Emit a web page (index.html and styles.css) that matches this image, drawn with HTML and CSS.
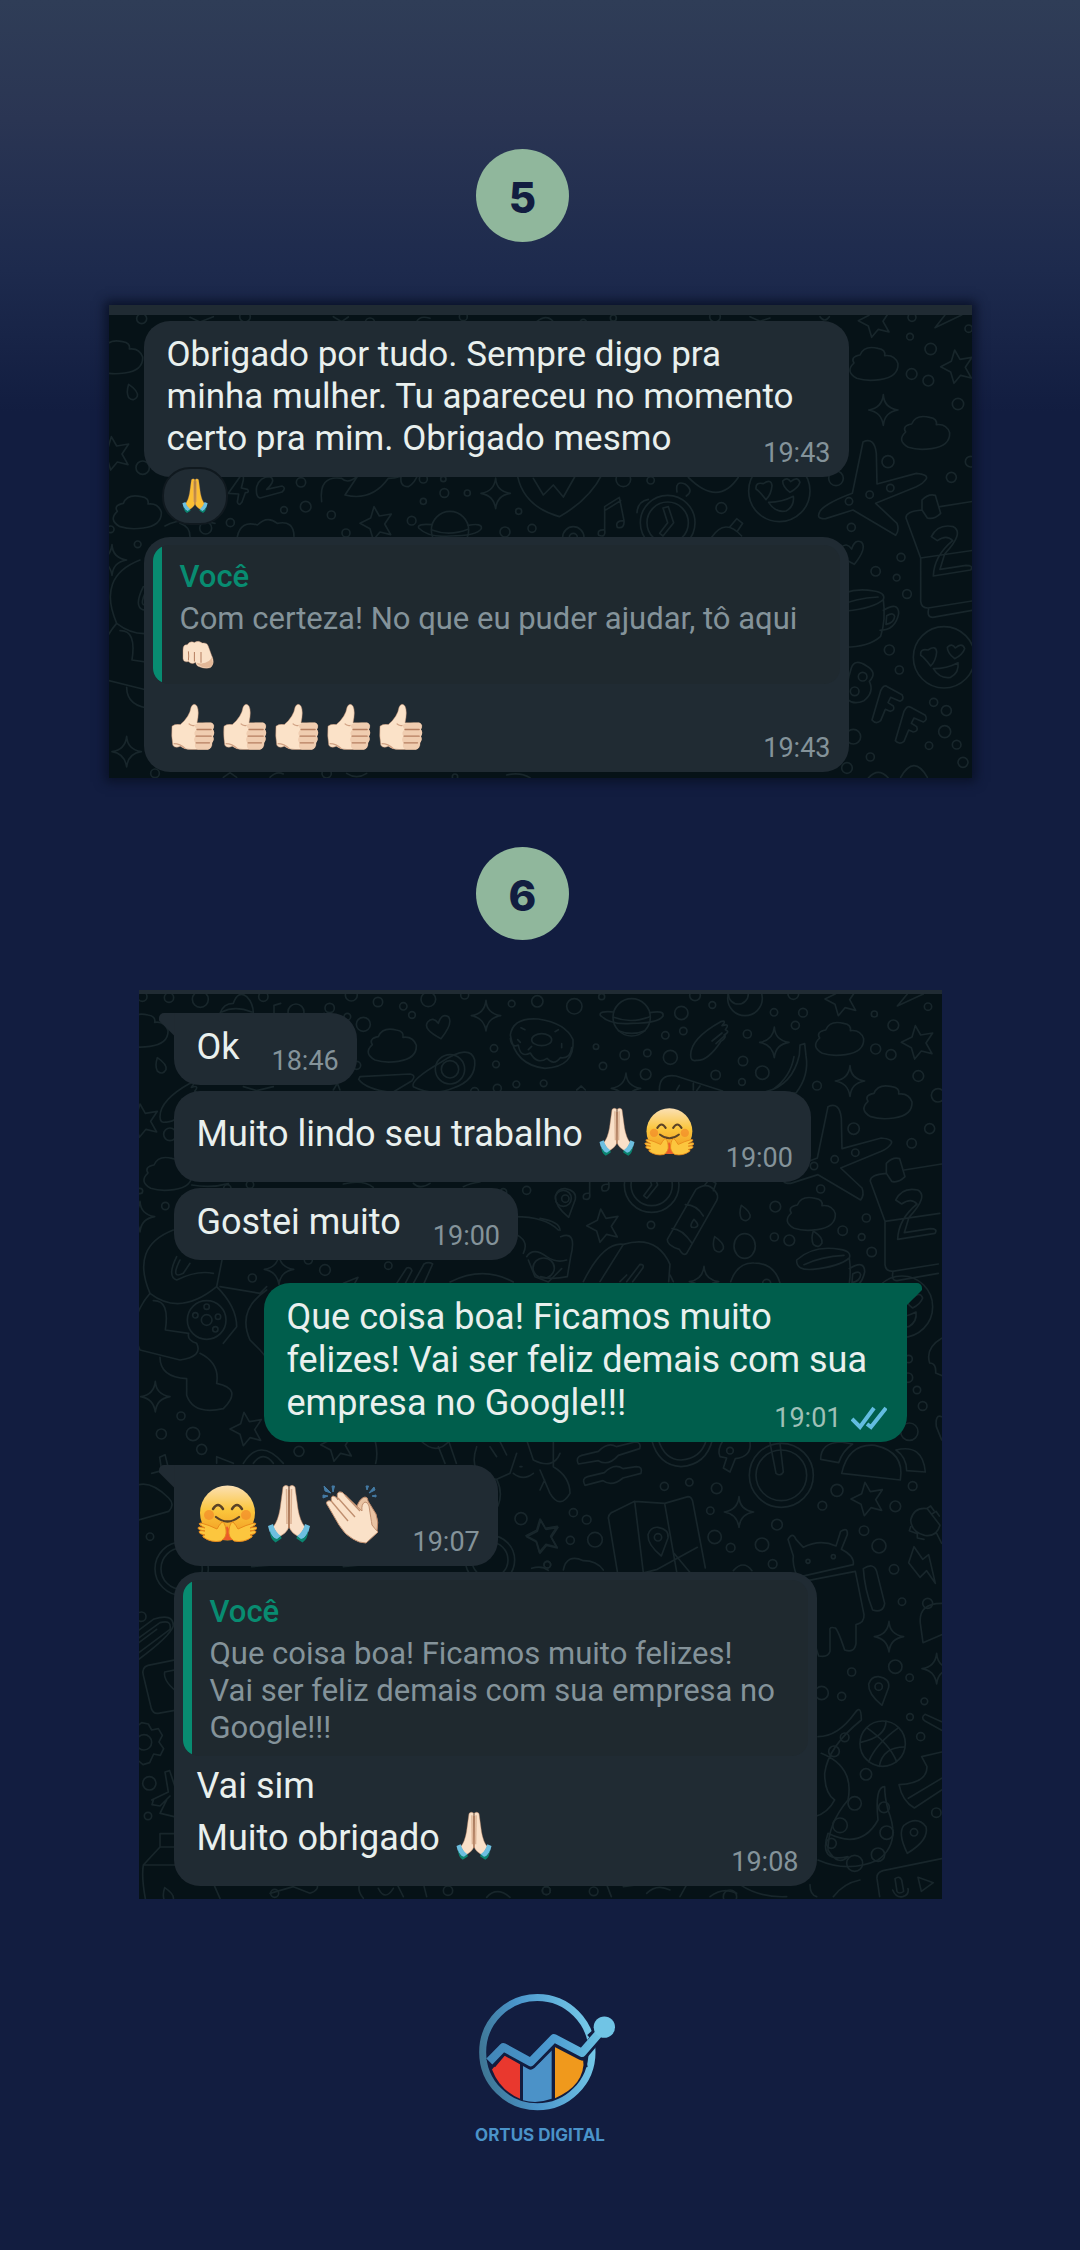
FILE: index.html
```html
<!DOCTYPE html>
<html lang="pt-BR">
<head>
<meta charset="utf-8">
<meta name="viewport" content="width=device-width, initial-scale=1">
<title>Ortus Digital – Depoimentos</title>
<link rel="stylesheet" href="styles.css">
</head>
<body>
<svg class="sprite" aria-hidden="true">
  <defs>
    <linearGradient id="face" x1="0" y1="0" x2="0" y2="1">
      <stop offset="0" stop-color="#fbe0b4"/><stop offset=".45" stop-color="#fbc63c"/><stop offset="1" stop-color="#f0931c"/>
    </linearGradient>
    <linearGradient id="ring" x1="0" y1=".6" x2="1" y2=".4">
      <stop offset="0" stop-color="#3f7796"/><stop offset=".4" stop-color="#4a95cb"/><stop offset="1" stop-color="#74c8e8"/>
    </linearGradient>
    <linearGradient id="trend" x1="0" y1="0" x2="1" y2="0">
      <stop offset="0" stop-color="#4287b8"/><stop offset=".5" stop-color="#4a98cf"/><stop offset="1" stop-color="#6cc3e3"/>
    </linearGradient>

    <symbol id="pray" viewBox="0 0 60 60">
      <g id="pray-half">
        <path d="M24 3q2.500-3 5.500-.5L30 43Q28 49 20 53L14 43Q19 37 21 25Z" fill="currentColor" stroke="#b98260" stroke-opacity=".5"/>
        <path d="M27.500 5L28 40" stroke="#c58f6c" stroke-opacity=".6" stroke-width="1.500"/>
        <path d="M9 42l5-2q2 8 8 12l-4 4Q11 53 9 42Z" fill="#6cbfe0"/>
        <path d="M11 47q2 7 7 8l4-3 .5 2.500-6 4Q11 55 11 47Z" fill="#0a8570"/>
      </g>
      <use href="#pray-half" transform="matrix(-1 0 0 1 60 0)"/>
      <path d="M30 6v38" stroke="#a8704f" stroke-width="1.500"/>
    </symbol>
    <symbol id="hug" viewBox="0 0 60 60">
      <circle cx="30.500" cy="29" r="27.500" fill="url(#face)"/>
      <circle cx="12" cy="31" r="5" fill="#f28a2a" opacity=".7"/><circle cx="49" cy="31" r="5" fill="#f28a2a" opacity=".7"/>
      <path d="M16 25q5-8 10 0M35 25q5-8 10 0" fill="none" stroke="#5b4327" stroke-width="2.500" stroke-linecap="round"/>
      <path d="M19 33q11.500 9 23 0" fill="none" stroke="#5b4327" stroke-width="2.200" stroke-linecap="round"/>
      <path d="M22 56l8-14 9 14Z" fill="#ec5b2a"/>
      <path id="hug-hand" d="M24 57q6-4 5-11-1-8-4-8-3 3-5 7-8-4-16-6-3 0-1 2l5 3q-7-2-7 0t7 3q-6-1-6 1t6 3q-3 0-2 2 8 6 18 4Z" fill="#fcc63e" stroke="#e8891b"/>
      <use href="#hug-hand" transform="matrix(-1 0 0 1 61 0)"/>
    </symbol>
    <symbol id="clap" viewBox="0 0 60 60">
      <path d="M3 2l7 7-6-2ZM48 9l5-6 1 3ZM11 2l1 6 1.500-6ZM45 2l1 4 1.500-4ZM2 11l5 1-5 2ZM51 12l4-1 0 2Z" fill="#447ba5" stroke="#447ba5"/>
      <path d="M36 22q3-8 8-9 3 0 3 4l8 13q3 8 1 17L44 57Z" fill="#e9c3a3" stroke="#b98566"/>
      <path d="M7 22q-3-4 0-5 2-1 4 1-2-5 1-6 3 0 5 4-2-7 1-8 3-1 6 3l17 16q-1-7 3-9 3 0 4 4 2 13 3 19 3 4 6 7l-12 11q-7 0-13-4-8-4-14-14Z" fill="#fae1c8" stroke="#c08f6f"/>
      <path d="M11 18l16 19M17 14l17 19M24 11l15 16" stroke="#c08f6f" stroke-width="1.400"/>
    </symbol>
    <symbol id="thumb" viewBox="0 0 60 60">
      <path d="M6 29q3-3 10-2Q27 18 29 6q3-6 7-1 3 6 0 20h17q5 2 2 8 3 4 0 8 2 4-1 8 0 7-5 8H29q-8 0-13-4-6 3-9-1-2-12-1-23Z" fill="#fbe2c8" stroke="#c9987a" stroke-opacity=".6"/>
      <path d="M34 27q5-3 19-2 5 2 2 8 3 4 0 8 2 4-1 8 0 7-5 8H37q-5-2-3-8-3-4 0-8-3-5 2-8-4-4-2-6Z" fill="#f0cdb0"/>
      <path d="M36 33h17M35 41h18M35 49h16" stroke="#b57f60" stroke-width="1.600" stroke-linecap="round"/>
      <path d="M8 50q8 0 14 6M26 26q3 3 7 2" fill="none" stroke="#d0a183" stroke-width="1.500"/>
    </symbol>
    <symbol id="fist" viewBox="0 0 60 60">
      <path d="M5 22q0-10 7-9 4-7 12-4 7-4 13 1 8-1 10 5l8 22q2 8-4 14-8 3-20-2-4-1-5-7-6 5-12-1-8 2-9-5Z" fill="#fae1c8" stroke="#c9987a" stroke-opacity=".7"/>
      <path d="M14 24q1 8 0 15M24 25v16M35 25v18" stroke="#b57f60" stroke-width="1.700" fill="none"/>
      <path d="M28 43q12 3 20-3 4-3 6-8-1 8 1 10 0 8-8 9-10 1-18-5Z" fill="#e3b898"/>
    </symbol>

    <g id="d-star"><path d="M-8-48L8-20 44-26 24 4 42 36 10 28-10 52-20 18-50 2-18-14Z"/></g>
    <g id="d-spark"><path d="M0-46Q2-6 44 0 4 6 0 46-6 6-44 0-4-6 0-46Z"/></g>
    <g id="d-cloud"><path d="M-50 40Q-86 20-58-6-70-24-40-30-28-60 14-50q24 4 20 22 30-4 40 24Q76 36 20 44-20 50-50 40Z"/></g>
    <g id="d-drop"><path d="M-10-22Q20-2 16 14 6 32-10 18-18 2-10-22Z"/></g>
    <g id="d-heart"><path d="M8 38Q-48 10-32-12-16-30 0-8 10-40 30-28 46-10 8 38Z"/></g>
    <g id="d-planet"><circle r="56"/><path d="M-54-16q-46-4-40 10 30 30 94 24Q80 18 94-4 98-22 54-14M-54 0q52 20 108-2M-40 40q40 16 80 0"/></g>
    <g id="d-face"><circle r="92"/><path d="M-40 26Q-60 0-70-6q-2-22 22-16 24-16 26 6Q-24 10-40 26ZM32 4Q10-12 10-30q14-14 24 2 20-18 28 2Q56-8 32 4ZM-32 34q40 0 74-18 4 30-22 44-32 6-52-26Z"/></g>
    <g id="d-plane"><path d="M-16-140q34-16 40 34l2 92 118-32q36 4 30 16-8 14-30 24L22 44l64 60q8 20-4 36L-46 64l-82 26q-32 2-16-24 20-24 96-52Z"/><circle cx="-58" cy="38" r="11"/><circle cx="4" cy="18" r="11"/><circle cx="66" cy="-2" r="11"/></g>
    <g id="d-calendar"><path d="M-66-50q-50 4-48 24l44 120v130q2 20 22 20L90 222M-66-50v-30q20-20 40-14L-10-40q-20 20-40 14ZM-12-60L100-78M-70 94L94 70M-46 246q-6 26 12 26L90 250M-38 30q20-40 66-30 34 18-26 82l-14 46 78-12q24 0 14 14L-32 148q2-60 58-106-18-20-46 0Z"/></g>
    <g id="d-cup"><path d="M-70-30Q-20-76 60-62q36 6 28 26-30 26-110 34-50 4-48-28ZM88-36q8 60-8 110-40 36-124 32M-48-16q50-24 120-28M88-4q46-28 46 10-10 50-56 50M98 12q20-12 24 2-2 20-26 24Z"/></g>
    <g id="d-clock"><circle r="82"/><circle r="62"/><path d="M-14-44l14 44-24 32 10 8 32-40L2-48ZM-58-70q-32 6-34 40M28-92q-6-36 24-24 28 20 4 36"/></g>
    <g id="d-note"><path d="M-26 40v-70l44-28 14 70M-26-18L22-48M-26 40q-24-2-18 16 22 8 18-16ZM32 12Q4 12 12 32q22 6 20-20Z"/></g>
    <g id="d-pin"><path d="M10 46Q-32 12-30-18-22-42 0-40 34-34 30-8Z"/><circle cx="0" cy="-10" r="11"/></g>
    <g id="d-donut"><path d="M-94-30Q-86-84-10-78 72-66 94-16 100 66 10 70-80 60-94-30ZM-94-20q4 30 24 20 6 40 36 24 20 36 50 16 20 24 40-2 30 4 34-30"/><ellipse rx="30" ry="18" cy="-16"/><path d="M-50-46l-12-6M-30 4l-10 10M40-40l10-6M60-4v12M-64-8l-8-8"/></g>
    <g id="d-egg"><path d="M-90 80Q-100 60-6 6 80-50 94 0 100 60 30 84-30 110-90 80Z"/><circle cx="20" cy="28" r="44"/><circle cx="20" cy="28" r="26"/></g>
    <g id="d-bottle"><path d="M-44 88q-38-12-36-30L6-92q34-24 56 4 14 14 6 30L-22 100q-10 10-22-12ZM32-104l14-18 20 12-8 22M-26-46q34 0 54 34M-66 26q30 0 60 44M0-2q-20 28 4 24 16-4-4-24Z"/></g>
    <g id="d-bike"><circle r="96"/><circle r="76"/><path d="M-34-98L-16-6q14 10 22-4L-4-96"/></g>
    <g id="d-map"><path d="M-130-70l70-34 90 6 70-20q10 0 14 14l38 200M-130-70q-12 10-8 20L-108 130l116-30 120-66M-60-104L-34 110M30-98L70 130M58 52l50 60"/><g transform="translate(10 14)"><use href="#d-pin"/></g></g>
    <g id="d-robot"><path d="M-94-40l-16-50q14-24 24 0l22 24Q-14-92 34-70l14-44q22-14 20 10L50-60q40 20 36 46L-82 24q-16-40-12-64ZM-82 40L92 6l26 130q2 24-24 30v56q-4 30-34 20-20-60-28-66-20-6-16 10v60q-6 20-34 14-28-90-36-100ZM116-2q30-20 40 8l24 96q-4 30-36 20-24-60-28-124Z"/><circle cx="-50" cy="-24" r="6"/><circle cx="26" cy="-38" r="6"/></g>
    <g id="d-ball"><circle r="68"/><path d="M-48-48Q20 0 42 54M48-48Q-20 0-42 54M-66-4Q10-20 10-68M66 10Q0 10-10 68"/></g>
    <g id="d-bolt"><path d="M-22-54L4-16 22-30 42 56 16 18-4 38-38-6Z"/></g>
    <g id="d-hand"><path d="M-60 40Q-60-10 30-60q20-6 4 12Q60-56 44-36 60-30 40-20 50-14 30 0-10 60-44 56-60 60-60 40ZM4-2L34-26M16 6l28-26"/></g>
    <g id="d-gear"><path d="M-40-20l-20 6v26l20 4 6 18-12 16 20 20 18-10 16 4 6 20h24l6-20 16-8 18 8 16-20-10-16 6-18"/><circle cx="6" cy="6" r="24"/></g>
    <g id="d-bff"><path d="M-90-60q10-30 46-6 34 20 8 46 16 32-16 58-30 14-50-4-6-40 12-94Z"/><circle cx="-56" cy="-34" r="13"/><circle cx="-80" cy="10" r="13"/><path d="M-2 8q10-20 20-12l44 24q8 14-6 20L28 28l-8 16 16 10q6 14-10 16l-14-6-14 34q-14 12-26-2Z"/><path d="M68 70q10-20 20-12l44 24q8 14-6 20L98 90l-8 16 16 10q6 14-10 16l-14-6-14 34q-14 12-26-2Z"/></g>
    <g id="d-skate"><path d="M-90 10q-10-20 10-26l50-12q30-30 54-14L80-56q20 0 14 20L30-16Q0 18-30 0ZM-70 74q-12-20 8-26l50-12q30-30 56-12l40-6q20 0 14 20L44 52Q10 80-16 60Z"/></g>
    <g id="d-dino"><path d="M-50-150Q-180-100-120 40-30 110 80 20L100-80M-120 40q-70 80-30 170l120 30q70-10 50-50-30-10-24-30l-70-10Q-60 60-110 62M80 20q60 60 60 120L100 190M-90 232q0 60 80 64v50q20 60 110 40 60-60-20-76 10-60-50-90M-40-70q-30 60 0 70 60-30 110-20M-30-60Q-60 0-20-20L0-50M90 20l120 20 20-20M230 30q-90 60-50 150l30 30q40 40 30 100"/><circle cx="50" cy="120" r="58"/><circle cx="50" cy="120" r="16"/><circle cx="16" cy="106" r="8"/><circle cx="50" cy="80" r="8"/><circle cx="84" cy="110" r="8"/><circle cx="76" cy="148" r="8"/></g>
    <g id="d-squid"><path d="M-110-90Q-50-90 0-160 20-190 20-140-80-60-90 20-90 80-60 100-80 140-120 150M-100-40q100 40 80 140-60 70-60 150 30 50 60 20-90 20-60-70 100 50 150-40Q60 60 90 60 90 90 100 130q40 100-30 150-90 40-180 0"/><circle cx="-62" cy="-46" r="16"/><circle cx="-30" cy="-88" r="13"/><circle cx="0" cy="110" r="20"/><circle cx="-44" cy="176" r="22"/><circle cx="-70" cy="230" r="15"/><circle cx="88" cy="122" r="16"/><circle cx="96" cy="198" r="20"/><circle cx="70" cy="264" r="20"/><circle cx="0" cy="290" r="24"/></g>
    <g id="d-carton"><path d="M-50-30L0-84h70v54M-50-30q-10 60 30 200M-50-30H90M0-84v-40h80"/><g transform="translate(24 60)"><use href="#d-drop"/></g></g>
    <g id="d-clip"><path d="M-70 50L30-22q36-10 30 20L-50 80M-60 20L10-32q60-20 60 20Q60 20-50 100M-60 58L20-2"/></g>
    <g id="d-frame"><path d="M-50-40L50-60M-50-40q-20 6-14 30L-40 90q6 16 20 14L60 90M0-20l50-10M0-20q-6 30 50 70"/></g>
  </defs>
</svg>

<main class="page">
  <section class="story">
    <h2 class="badge">5</h2>
    <div class="chat chat--wide">
      <svg class="doodles" aria-hidden="true">
        <g transform="translate(-19 -15) scale(.33333)">
          <use href="#d-cloud" x="84" y="205"/><use href="#d-drop" x="126" y="305"/><use href="#d-star" x="72" y="488"/><use href="#d-cloud" x="140" y="670"/>
          <use href="#d-spark" x="66" y="810"/><use href="#d-dino" x="200" y="960"/><use href="#d-spark" x="110" y="1385"/><circle cx="155" cy="86" r="15"/><circle cx="158" cy="533" r="20"/><circle cx="143" cy="763" r="10"/><circle cx="62" cy="718" r="10"/><circle cx="195" cy="1450" r="13"/>
          <path d="M415 610l35-50q12-10 10 10l-6 24 18 4q8 10-6 10l-10 28q-10 14-14 0l4-24ZM500 590q10-30 40-30 20 10-10 38l46-10q14 6 0 18l-66 18q-14-4-10-34Z"/>
          <path d="M695 635q-10-80 60-70 20 20 50-10l-40 60q80 20 130-50 40 0 60-20M935 550q-10 40 20 40 20-10 30-40"/>
          <circle cx="633" cy="577" r="14"/><circle cx="582" cy="660" r="10"/><circle cx="647" cy="650" r="16"/><circle cx="724" cy="675" r="12"/><circle cx="421" cy="698" r="12"/><circle cx="347" cy="714" r="18"/><circle cx="768" cy="729" r="12"/>
          <path d="M225 708q50-30 150-8M270 700q30 10 30 40M442 740q10-50 60-35 30-30 60-5 50-10 50 40"/>
          <use href="#d-star" x="860" y="698"/><use href="#d-planet" x="1080" y="720"/><circle cx="965" cy="692" r="13"/><circle cx="1000" cy="634" r="9"/><circle cx="1000" cy="567" r="12"/><circle cx="1063" cy="609" r="13"/><circle cx="1060" cy="567" r="8"/><circle cx="1132" cy="609" r="9"/><circle cx="1286" cy="664" r="9"/><circle cx="1245" cy="726" r="15"/><circle cx="1326" cy="715" r="12"/>
          <use href="#d-spark" x="1217" y="610"/><path d="M1283 560q20 90 125 120 90-50 130-130M1330 565l30 50 30-30 30 36 34-60"/><circle cx="1450" cy="742" r="32"/><circle cx="1450" cy="742" r="12"/>
          <circle cx="465" cy="80" r="16"/><circle cx="840" cy="98" r="14"/><circle cx="1120" cy="80" r="12"/><path d="M980 95q10-20 40-10M730 80l25 15 20-14M1340 95q30-24 50 0M300 82l30 14 40-16"/>
          <circle cx="710" cy="1450" r="14"/><circle cx="1095" cy="1460" r="8"/><path d="M400 1462l20-14 20 14M540 1462q20-20 40-10M1250 1455q40-10 70 8M770 1450q30 20 60 0"/>
        </g>
        <g transform="translate(451 -15) scale(.33333)">
          <circle cx="190" cy="568" r="22"/><circle cx="272" cy="571" r="11"/><path d="M385 562q90 90 150 0"/><use href="#d-note" x="160" y="680"/><use href="#d-clock" x="323" y="698"/><circle cx="484" cy="654" r="16"/><path d="M455 742q40-60 90-4M510 710l20-24 18 14-16 24"/>
          <use href="#d-face" x="658" y="603"/><circle cx="828" cy="565" r="22"/><use href="#d-plane" x="925" y="596"/><circle cx="874" cy="712" r="12"/>
          <use href="#d-star" x="945" y="90"/><use href="#d-star" x="1192" y="228"/><path d="M1205 75l-80 38 30-38"/><circle cx="1056" cy="82" r="12"/><circle cx="1050" cy="140" r="10"/><circle cx="1112" cy="177" r="17"/><circle cx="1226" cy="116" r="11"/><circle cx="1055" cy="252" r="16"/><circle cx="1105" cy="272" r="16"/><circle cx="1194" cy="342" r="17"/>
          <use href="#d-cloud" x="940" y="225"/><use href="#d-spark" x="970" y="360"/><use href="#d-cloud" x="1095" y="432"/><circle cx="984" cy="515" r="18"/><circle cx="1174" cy="562" r="15"/><circle cx="1232" cy="515" r="16"/>
          <use href="#d-calendar" x="1152" y="710"/><use href="#d-heart" x="875" y="785"/><circle cx="1023" cy="802" r="12"/><circle cx="947" cy="844" r="14"/><circle cx="1010" cy="863" r="10"/><circle cx="1041" cy="912" r="13"/>
          <use href="#d-cup" x="882" y="965"/><circle cx="988" cy="1080" r="15"/><circle cx="1018" cy="1140" r="12"/><use href="#d-face" x="1152" y="1102"/><use href="#d-bff" x="964" y="1194"/>
          <circle cx="1121" cy="1237" r="12"/><circle cx="1159" cy="1262" r="15"/><circle cx="1154" cy="1325" r="18"/><circle cx="1107" cy="1367" r="11"/><circle cx="1190" cy="1364" r="13"/><circle cx="1209" cy="1417" r="15"/><circle cx="931" cy="1401" r="12"/><circle cx="861" cy="1434" r="16"/><circle cx="880" cy="1340" r="22"/><path d="M1022 1462q40-70 80 0M925 1464q30-34 60 0"/>
          <path d="M570 80l30 14 30-10M780 80q14 20 28 0"/><circle cx="465" cy="80" r="16"/><circle cx="70" cy="98" r="10"/><circle cx="160" cy="84" r="9"/>
        </g>
      </svg>
      <div class="chat__bar"></div>
      <ol class="thread">
        <li class="bubble bubble--705 bubble--overlap">
          <p class="text">Obrigado por tudo. Sempre digo pra<br>minha mulher. Tu apareceu no momento<br>certo pra mim. Obrigado mesmo</p>
          <time class="time">19:43</time>
          <span class="reaction"><svg class="emoji emoji--sm emoji--yellow" role="img" aria-label="🙏"><use href="#pray"/></svg></span>
        </li>
        <li class="bubble bubble--705 bubble--reply bubble--spaced">
          <blockquote class="quote"><cite class="quote__who">Você</cite>
            <p class="quote__text">Com certeza! No que eu puder ajudar, tô aqui<br><svg class="emoji emoji--sm" role="img" aria-label="👊🏻"><use href="#fist"/></svg></p></blockquote>
          <div class="bubble--overlap">
            <p class="emoji-row emoji-row--thumbs">
              <svg class="emoji" role="img" aria-label="👍🏻"><use href="#thumb"/></svg><svg class="emoji" role="img" aria-label="👍🏻"><use href="#thumb"/></svg><svg class="emoji" role="img" aria-label="👍🏻"><use href="#thumb"/></svg><svg class="emoji" role="img" aria-label="👍🏻"><use href="#thumb"/></svg><svg class="emoji" role="img" aria-label="👍🏻"><use href="#thumb"/></svg>
            </p>
            <time class="time">19:43</time>
          </div>
        </li>
      </ol>
    </div>
  </section>

  <section class="story">
    <h2 class="badge">6</h2>
    <div class="chat chat--flat">
      <svg class="doodles" aria-hidden="true">
        <g transform="translate(-9 -10) scale(.33333)">
          <circle cx="37" cy="50" r="14"/><circle cx="117" cy="53" r="14"/><circle cx="211" cy="58" r="24"/><circle cx="400" cy="50" r="14"/><path d="M270 100q10-30 40-30 14-40 40-20 20 20 20 50M275 96q40-20 90 0"/><use href="#d-gear" x="492" y="90"/>
          <circle cx="599" cy="84" r="14"/><circle cx="664" cy="45" r="18"/><circle cx="652" cy="110" r="10"/><circle cx="744" cy="66" r="14"/><circle cx="820" cy="79" r="11"/><circle cx="846" cy="105" r="10"/><circle cx="895" cy="58" r="22"/><circle cx="700" cy="133" r="21"/><circle cx="1004" cy="45" r="12"/><circle cx="1145" cy="71" r="10"/><circle cx="1222" cy="64" r="17"/>
          <use href="#d-spark" x="1068" y="107"/><use href="#d-cloud" x="785" y="200"/><use href="#d-heart" x="925" y="138"/><use href="#d-egg" x="940" y="240"/><use href="#d-donut" x="1235" y="195"/><path d="M690 290l150-8q20 4 6 20l-60 36q-80-10-100-40Z"/>
          <circle cx="680" cy="256" r="12"/><circle cx="1092" cy="205" r="11"/><circle cx="1098" cy="253" r="10"/><circle cx="1159" cy="313" r="10"/><circle cx="1102" cy="325" r="12"/><circle cx="1241" cy="310" r="10"/><circle cx="1034" cy="335" r="12"/>
          <use href="#d-cloud" x="40" y="155"/><use href="#d-drop" x="92" y="255"/><use href="#d-hand" x="150" y="370"/><use href="#d-star" x="38" y="420"/><circle cx="120" cy="463" r="19"/><use href="#d-cloud" x="112" y="585"/><circle cx="106" cy="678" r="11"/><circle cx="30" cy="633" r="8"/><use href="#d-spark" x="30" y="710"/>
          <path d="M340 320l40 12 50-12M610 330l12-20 8 20M185 615q60 10 110-4M640 612q60-14 90 10M850 610q20 20 50 0M1000 620q20-10 50-14"/><circle cx="292" cy="625" r="11"/><circle cx="360" cy="614" r="11"/>
          <circle cx="1190" cy="631" r="12"/><circle cx="1300" cy="655" r="24"/><circle cx="1120" cy="636" r="10"/><use href="#d-dino" x="180" y="900"/><use href="#d-spark" x="447" y="868"/><circle cx="367" cy="894" r="12"/><circle cx="585" cy="870" r="16"/><circle cx="775" cy="857" r="11"/><circle cx="535" cy="840" r="12"/>
          <path d="M800 910l30-46q12-4 16 8l-20 38M850 910l32-58q14-8 26 0l-26 58M960 906q100-50 190 0M1155 710q90 0 130 40M1150 760q50 20 30 60M1190 830q20-30 60 0 30 20 60 10M1195 840l20 50 40 16 40-40M640 910l44-18-10 18"/><ellipse cx="1241" cy="864" rx="32" ry="30"/>
          <use href="#d-spark" x="76" y="1250"/><circle cx="153" cy="1308" r="12"/><circle cx="94" cy="1362" r="15"/><circle cx="189" cy="1362" r="20"/><use href="#d-star" x="350" y="1345"/>
        </g>
        <g transform="translate(401 -10) scale(.33333)">
          <circle cx="103" cy="79" r="23"/><use href="#d-planet" x="275" y="112"/><circle cx="424" cy="99" r="20"/><circle cx="465" cy="46" r="16"/><circle cx="517" cy="75" r="10"/><circle cx="185" cy="50" r="9"/><circle cx="615" cy="55" r="52"/><circle cx="595" cy="42" r="30"/><circle cx="702" cy="97" r="11"/><circle cx="789" cy="98" r="13"/><circle cx="766" cy="136" r="12"/><circle cx="760" cy="42" r="16"/>
          <use href="#d-hand" x="512" y="185"/><use href="#d-spark" x="703" y="187"/><use href="#d-star" x="905" y="55"/><use href="#d-cloud" x="897" y="180"/><use href="#d-star" x="1134" y="185"/><use href="#d-cloud" x="1042" y="370"/><use href="#d-spark" x="930" y="303"/><path d="M1150 42l-78 36 30-36"/>
          <path d="M780 195l14-4 4 36q10 60-30 112l-90-4q80-20 100-110ZM762 230q-10 60-60 96"/><path d="M358 330q0-50 50-42l140 45M410 330l8-14M470 332l10-14M460 310v20"/><use href="#d-spark" x="258" y="325"/><path d="M110 330l14-12 12 12"/>
          <circle cx="376" cy="166" r="11"/><circle cx="430" cy="153" r="11"/><circle cx="168" cy="200" r="8"/><circle cx="254" cy="225" r="14"/><circle cx="322" cy="219" r="11"/><circle cx="391" cy="232" r="21"/><circle cx="189" cy="258" r="11"/><circle cx="317" cy="283" r="16"/><circle cx="527" cy="285" r="14"/><circle cx="622" cy="162" r="12"/><circle cx="609" cy="243" r="14"/><circle cx="667" cy="278" r="20"/><circle cx="606" cy="306" r="10"/><circle cx="831" cy="317" r="13"/>
          <circle cx="1003" cy="102" r="9"/><circle cx="1060" cy="136" r="16"/><circle cx="1164" cy="80" r="11"/><circle cx="1007" cy="207" r="15"/><circle cx="1053" cy="224" r="15"/><circle cx="1135" cy="288" r="16"/><circle cx="1194" cy="346" r="20"/><circle cx="941" cy="446" r="17"/><circle cx="1169" cy="446" r="15"/><circle cx="1115" cy="490" r="14"/>
          <use href="#d-plane" x="880" y="520"/><use href="#d-calendar" x="1105" y="630"/><circle cx="842" cy="627" r="12"/><use href="#d-pin" x="76" y="666"/><use href="#d-note" x="175" y="600"/><use href="#d-clock" x="335" y="615"/><use href="#d-star" x="190" y="735"/><circle cx="333" cy="735" r="11"/><use href="#d-bottle" x="462" y="720"/><use href="#d-drop" x="614" y="698"/><circle cx="706" cy="680" r="16"/>
          <use href="#d-cloud" x="812" y="705"/><circle cx="979" cy="714" r="12"/><circle cx="908" cy="752" r="14"/><circle cx="965" cy="771" r="10"/><circle cx="995" cy="816" r="14"/><circle cx="703" cy="771" r="12"/><circle cx="748" cy="781" r="16"/><use href="#d-drop" x="830" y="775"/><use href="#d-drop" x="534" y="792"/><ellipse cx="614" cy="798" rx="32" ry="37"/><use href="#d-cup" x="840" y="870"/>
          <path d="M130 905q60-120 120-112 100-30 140 60l-4 52M250 793l-70 112M240 905l20-20M260 905l40-52q14 0 8 12l-30 40M572 905q20-58 70-56 60 0 78 60M0 715q60 10 60 36M62 770q50-20 30 60l-10 60q-50 10-80 0M390 885l10 20"/><use href="#d-spark" x="492" y="905"/><circle cx="680" cy="910" r="12"/>
          <use href="#d-face" x="1086" y="980"/><path d="M1205 1075q-50 30-36 74 20 0 18 30l20 8M1205 1310q-20-8-16 30l16 40"/><circle cx="1106" cy="1137" r="11"/><circle cx="1104" cy="1193" r="14"/><circle cx="1131" cy="1230" r="11"/><circle cx="1148" cy="1278" r="13"/><circle cx="1108" cy="1355" r="26"/>
        </g>
        <g transform="translate(-9 450) scale(.33333)">
          <circle cx="215" cy="28" r="15"/><circle cx="507" cy="34" r="15"/><use href="#d-star" x="622" y="12"/><path d="M65 100l30-8-6-40 16-8 10 40 20 16M260 70v-20l50 20M340 70q50-80 120 0M370 70q30-40 60 0M735 0q10 40 2 70M870 0q50 50 90 0M925 20l20 50M955 0l24 70M1040 20q-30 90 60 98l40-18 20-60M1080 20l20 30M1110 5l20 40M1150 100q30 24 60 0M1190 0l20 60q60 30 80-20M1170 80h6M1100 118q20 40 4 80M26 240l90-26q20-20 0-40-50-50-90-40"/>
          <circle cx="60" cy="290" r="11"/><circle cx="1173" cy="236" r="18"/><use href="#d-star" x="1238" y="285"/><circle cx="1252" cy="374" r="10"/><circle cx="155" cy="386" r="80"/><circle cx="155" cy="386" r="62"/><circle cx="1080" cy="360" r="74"/><circle cx="1080" cy="360" r="54"/><path d="M365 380l100-8M640 380l60-6M1205 385q30-10 50 6"/>
          <circle cx="34" cy="530" r="14"/><use href="#d-clip" x="60" y="570"/><use href="#d-frame" x="104" y="716"/><circle cx="42" cy="907" r="23"/><path d="M25 856l10-8 20 4 10 18 20-4 12 20-10 20 14 20-10 20-20-4-12 26-20 6-14-12"/><circle cx="58" cy="1030" r="20"/><path d="M65 1080l50-24-10-60 14-4 20 60M70 1080l-4 14 24 4 30-30M92 1120l40 10M110 1080l-20 40"/><circle cx="54" cy="1128" r="11"/><use href="#d-carton" x="90" y="1305"/>
          <path d="M250 1330l20 45M420 1360l70-20 50 20q30-10 20-30M690 1330q-10 20 10 45M800 1330l20 40M880 1330l10 40M745 1345q20 40 45 0M1070 1372q30-34 70 0"/><circle cx="434" cy="1360" r="12"/><circle cx="954" cy="1352" r="14"/><circle cx="1249" cy="1352" r="12"/>
        </g>
        <g transform="translate(401 450) scale(.33333)">
          <path d="M40 0v80q50 30 50 80-30 50-60 0L0 90M0 150l14-30M335 0q20 76 88 80 76-6 94-80M355 0q20 60 68 60 60-4 76-60M550 0q-20 30-10 50l20 4-10 30 20 12 16-40q50-6 44-50"/><circle cx="570" cy="32" r="10"/><use href="#d-skate" x="205" y="62"/><use href="#d-bike" x="724" y="106"/><path d="M905 100q20-90 100-84 90 20 76 104ZM842 58q0-50 60-52l36 6q-30 20-42 56ZM1068 30q80-20 88 66l-56-4q0-40-32-62"/>
          <circle cx="373" cy="139" r="12"/><circle cx="448" cy="127" r="11"/><circle cx="530" cy="145" r="16"/><circle cx="891" cy="151" r="18"/><circle cx="847" cy="197" r="13"/><use href="#d-star" x="983" y="175"/><circle cx="1066" cy="199" r="16"/><circle cx="1118" cy="138" r="13"/><circle cx="100" cy="218" r="12"/><circle cx="140" cy="239" r="13"/><circle cx="165" cy="299" r="22"/><circle cx="91" cy="301" r="12"/><use href="#d-star" x="10" y="288"/><circle cx="22" cy="374" r="10"/>
          <use href="#d-map" x="344" y="288"/><circle cx="511" cy="212" r="11"/><use href="#d-spark" x="597" y="216"/><circle cx="524" cy="291" r="20"/><circle cx="572" cy="323" r="13"/><circle cx="711" cy="254" r="16"/><circle cx="666" cy="314" r="20"/><circle cx="698" cy="372" r="13"/><path d="M70 390q10-50 60-28 40 0 60 28M580 392q30-34 56 0"/>
          <use href="#d-robot" x="854" y="388"/><circle cx="972" cy="272" r="14"/><circle cx="1017" cy="318" r="21"/><circle cx="1062" cy="388" r="14"/><circle cx="1086" cy="485" r="11"/><use href="#d-bolt" x="1144" y="374"/><path d="M1112 240q10-40 50-34l38 50q-10 36-46 30-40-10-42-46ZM1160 206l12-8 10 14M1176 222l12-8 10 14M1112 260l-4 12 20 8M1132 280l0 14 20 4M1190 280l15 30"/>
          <path d="M1205 490q-70 0-64 60l8 58 56-24"/><circle cx="1163" cy="490" r="15"/><use href="#d-spark" x="1047" y="590"/><use href="#d-spark" x="1190" y="686"/><circle cx="1066" cy="680" r="20"/><circle cx="935" cy="696" r="12"/><circle cx="1109" cy="713" r="11"/><use href="#d-pin" x="1016" y="750"/><circle cx="845" cy="759" r="20"/><circle cx="905" cy="769" r="12"/><circle cx="1153" cy="784" r="10"/><circle cx="1110" cy="831" r="10"/><circle cx="1142" cy="890" r="12"/><use href="#d-ball" x="1028" y="911"/><path d="M1205 845l-50-22q-14 10 0 20l50 28M1205 936l-60 14 16 30q0 50-84 54 10 50 46 70l82-54M1105 1075l100-60"/>
          <use href="#d-squid" x="944" y="980"/><circle cx="978" cy="1003" r="17"/><circle cx="1189" cy="1118" r="14"/><path d="M1102 1240q-30-60-10-84 40-30 66 4 10 40-56 80Z"/><circle cx="1122" cy="1177" r="11"/><path d="M1205 1256l-176 36q-20 6-18 24l8 54M1065 1316q14-10 20 4l6 34q-14 10-20 0ZM1058 1350q10 24 30 20 20-6 16-24M1134 1312l46 16-36 26ZM200 1334l14 36M250 1340l60-8M320 1360q30-30 70-10M420 1370l20-36M510 1370q40-30 80-10M600 1334q60 40 140 36M810 1334q0 30 20 36M960 1320q-50 10-80 50"/><circle cx="19" cy="1352" r="12"/><circle cx="161" cy="1354" r="13"/><circle cx="570" cy="1370" r="20"/>
        </g>
      </svg>
      <div class="chat__bar chat__bar--thin"></div>
      <ol class="thread thread--roomy">
        <li class="bubble bubble--row bubble--tail"><p class="text">Ok</p><time class="time">18:46</time></li>
        <li class="bubble bubble--row"><p class="text text--tall">Muito lindo seu trabalho <svg class="emoji" role="img" aria-label="🙏🏻"><use href="#pray"/></svg><svg class="emoji" role="img" aria-label="🤗"><use href="#hug"/></svg></p><time class="time">19:00</time></li>
        <li class="bubble bubble--row"><p class="text">Gostei muito</p><time class="time">19:00</time></li>
        <li class="bubble bubble--overlap bubble--sent">
          <p class="text">Que coisa boa! Ficamos muito<br>felizes! Vai ser feliz demais com sua<br>empresa no Google!!!</p>
          <time class="time">19:01 <svg class="ticks" viewBox="0 0 36 24" role="img" aria-label="Lida"><path d="M1 13l8 8L23 2M16 18l4 3L35 2"/></svg></time>
        </li>
        <li class="bubble bubble--row bubble--tail bubble--turn"><p class="emoji-row emoji-row--big"><svg class="emoji" role="img" aria-label="🤗"><use href="#hug"/></svg><svg class="emoji" role="img" aria-label="🙏🏻"><use href="#pray"/></svg><svg class="emoji" role="img" aria-label="👏🏻"><use href="#clap"/></svg></p><time class="time">19:07</time></li>
        <li class="bubble bubble--643 bubble--reply">
          <blockquote class="quote"><cite class="quote__who">Você</cite>
            <p class="quote__text">Que coisa boa! Ficamos muito felizes!<br>Vai ser feliz demais com sua empresa no<br>Google!!!</p></blockquote>
          <div class="bubble--overlap">
            <div class="lines"><p class="text text--snug">Vai sim</p><p class="text text--tall">Muito obrigado <svg class="emoji" role="img" aria-label="🙏🏻"><use href="#pray"/></svg></p></div>
            <time class="time">19:08</time>
          </div>
        </li>
      </ol>
    </div>
  </section>

  <footer class="brand">
    <svg class="brand__mark" viewBox="84 60 414 356" aria-hidden="true">
      <path d="M126 292L166 245 210 268V380Q150 355 126 292Z" fill="#e9382e"/>
      <path d="M219 275q26 16 52-6l34-42V380q-44 16-86 4Z" fill="#4b92c8"/>
      <path d="M315 220l86 40q4 80-86 118Z" fill="#f0991c"/>
      <circle cx="262" cy="240" r="164" fill="none" stroke="url(#ring)" stroke-width="21"/>
      <path d="M415 192L438 172M400 235l8 50" stroke="#121d40" stroke-width="10"/>
      <path d="M122 274L160 229 242 275 312 204 396 248 440 196" fill="none" stroke="#121d40" stroke-width="34" stroke-linejoin="round"/>
      <path d="M118 268L160 225 242 270 312 198 396 242 462 166" fill="none" stroke="url(#trend)" stroke-width="25" stroke-linejoin="round"/>
      <circle cx="463" cy="165" r="32" fill="#70c4e5"/>
    </svg>
    <p class="brand__name">ORTUS DIGITAL</p>
  </footer>
</main>
</body>
</html>
```
FILE: styles.css
```css
:root {
  --navy: #121d40;
  --mint: #90b79c;
  --wallpaper: #061217;
  --doodle: #18262b;
  --received: #202b33;
  --sent: #005e4c;
  --ink: #e9f0ee;
  --muted: #84939a;
  --accent: #088c71;
}

* { box-sizing: border-box; }

body {
  margin: 0;
  background: var(--navy) linear-gradient(#2f3d57, #2a3553 120px, #1d2a4d 270px, var(--navy) 412px) no-repeat;
  color: var(--ink);
  font-family: Roboto, "Liberation Sans", sans-serif;
}

p, h2, ol, blockquote { margin: 0; padding: 0; }
ol { list-style: none; }
.sprite { position: absolute; width: 0; height: 0; }

.page {
  display: flex;
  flex-direction: column;
  align-items: center;
  gap: 69px;
  padding: 149px 36px 96px;
}

.story {
  display: flex;
  flex-direction: column;
  align-items: center;
  gap: 63px;
  width: 100%;
}
.story + .story { gap: 50px; }

.badge {
  display: grid;
  place-items: center;
  width: 93px;
  height: 93px;
  margin-right: 35px;
  padding-top: 4px;
  border-radius: 50%;
  background: var(--mint);
  color: var(--navy);
  font: 800 42px/48px Inter, "Open Sans", sans-serif;
}

.chat {
  position: relative;
  width: 100%;
  overflow: hidden;
  background: var(--wallpaper);
}
.chat--wide { max-width: 863px; overflow: visible; box-shadow: 0 0 10px 4px #0a1228; }
.chat--flat { max-width: 803px; }
.chat__bar { position: relative; height: 10px; background: var(--received); }
.chat__bar--thin { height: 4px; }

.doodles {
  position: absolute;
  inset: 0;
  width: 100%;
  height: 100%;
  fill: none;
  stroke: var(--doodle);
  stroke-width: 5;
  stroke-linejoin: round;
  stroke-linecap: round;
}

.thread {
  position: relative;
  display: flex;
  flex-direction: column;
  align-items: flex-start;
  gap: 6px;
  padding: 6px 35px;
}
.thread--roomy { padding: 19px 35px 13px; }

.bubble {
  position: relative;
  max-width: 100%;
  padding: 13px 18px 8px 23px;
  border-radius: 26px;
  background: var(--received);
}
.bubble--705 { width: 705px; }
.bubble--643 { width: 643px; }
.bubble--row { display: flex; align-items: flex-end; gap: 32px; }
.bubble--overlap { display: grid; }
.bubble--overlap > .text,
.bubble--overlap > .lines,
.bubble--overlap > .emoji-row,
.bubble--overlap > .time { grid-area: 1 / 1; }
.bubble--overlap > .time { place-self: end; }
.bubble--spaced { margin-top: 54px; }
.bubble--turn { margin-top: 17px; }

.bubble--tail { border-top-left-radius: 0; }
.bubble--tail::before,
.bubble--sent::before {
  content: "";
  position: absolute;
  top: 0;
  left: -15px;
  width: 16px;
  height: 23px;
  border-top-left-radius: 5px;
  background: inherit;
  clip-path: polygon(0 0, 100% 0, 100% 100%, 0 30%);
}
.bubble--sent {
  align-self: flex-end;
  width: 643px;
  margin-top: 17px;
  border-top-right-radius: 0;
  background: var(--sent);
}
.bubble--sent::before { right: -15px; left: auto; transform: scaleX(-1); }

.text { padding-bottom: 9px; font-size: 35px; line-height: 42px; }
.thread--roomy .text { font-size: 36px; }
.bubble--sent .text { line-height: 43px; }
.text.text--tall { height: 70px; line-height: 61px; }
.text--snug { padding: 1px 0; }
.time { color: var(--muted); font-size: 27px; line-height: 32px; }
.bubble--sent .time { display: flex; align-items: center; gap: 9px; margin-right: 2px; color: #9fc0b7; }
.ticks { width: 36px; height: 24px; fill: none; stroke: #62bce0; stroke-width: 4; }

.bubble--reply { padding: 8px 9px; }
.bubble--reply .bubble--overlap { padding: 8px 9px 0 14px; }
.quote {
  position: relative;
  overflow: hidden;
  padding: 13px 20px 10px 27px;
  border-radius: 16px;
  background: #1f292f;
  font-size: 31px;
  line-height: 37px;
}
.quote::before {
  content: "";
  position: absolute;
  inset: 0 auto 0 0;
  width: 9px;
  background: var(--accent);
}
.quote__who { display: block; margin-bottom: 5px; color: var(--accent); font-style: normal; font-weight: 500; }
.quote__text { color: var(--muted); }

.emoji { width: 50px; height: 50px; color: #f9e0c8; vertical-align: middle; }
.text .emoji + .emoji { margin-left: 2px; }
.text .emoji { margin-top: -8px; }
.emoji--sm { width: 36px; height: 36px; vertical-align: top; }
.emoji--yellow { color: #fbbf34; }
.emoji-row { display: flex; align-items: center; gap: 2px; padding-bottom: 9px; }
.emoji-row--thumbs { height: 72px; padding-top: 6px; }
.emoji-row--big { height: 80px; }
.emoji-row--big .emoji { width: 60px; height: 60px; }

.reaction {
  position: absolute;
  bottom: -48px;
  left: 18px;
  display: grid;
  place-items: center;
  width: 66px;
  height: 58px;
  border: 2px solid #10191f;
  border-radius: 28px;
  background: var(--received);
}

.brand { display: flex; flex-direction: column; align-items: center; gap: 12px; margin-top: 24px; }
.brand__mark { width: 138px; height: 119px; margin-left: 14px; }
.brand__name { color: #4a93c9; font: 700 17px/24px Inter, sans-serif; }
```
